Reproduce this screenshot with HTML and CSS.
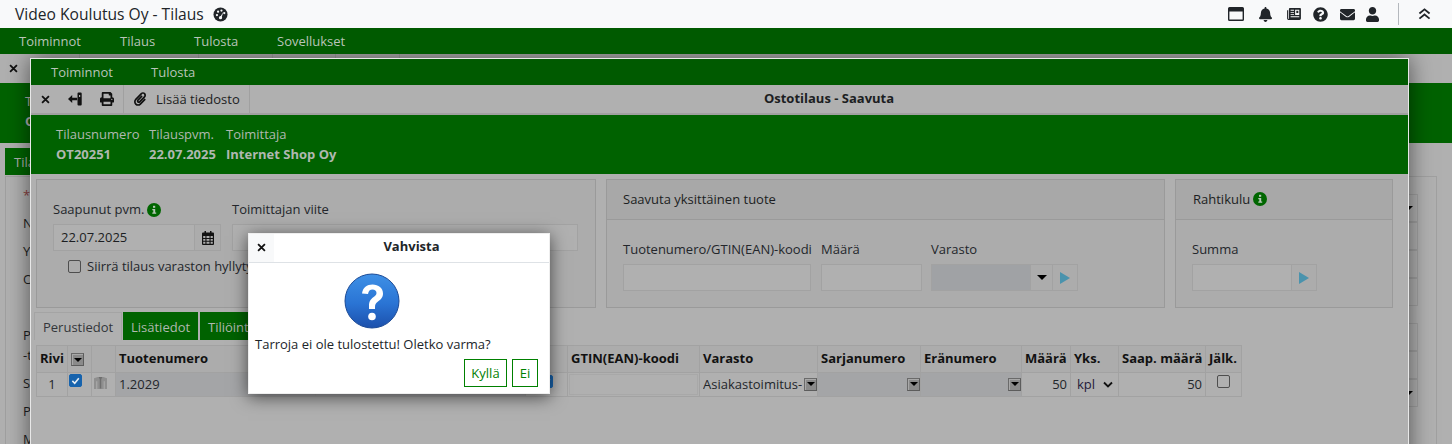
FILE: index.html
```html
<!DOCTYPE html>
<html lang="fi">
<head>
<meta charset="utf-8">
<title>Video Koulutus Oy - Tilaus</title>
<link rel="stylesheet" href="styles.css">
</head>
<body>
<svg class="defs" width="0" height="0">
  <defs>
    <symbol id="i-x" viewBox="0 0 10 10"><path d="M1.200 1.200l7.600 7.600m0-7.600L1.200 8.800" fill="none" stroke="#111" stroke-width="2"/></symbol>
    <symbol id="i-info" viewBox="0 0 14 14"><circle cx="7" cy="7" r="7" fill="#006600"/><rect x="6" y="2.800" width="2.200" height="2" fill="#b8c8b8"/><path d="M5.300 6h2.900v3.600h1v1.200H5.300V9.600h1V7.200h-1z" fill="#b8c8b8"/></symbol>
    <symbol id="i-play" viewBox="0 0 12 14"><path d="M1 1l10 6-10 6z" fill="#4a93ad"/></symbol>
    <symbol id="i-check" viewBox="0 0 14 14"><path d="M3 7.500l3 3 5.200-6.500" fill="none" stroke="#e8eef4" stroke-width="2"/></symbol>
  </defs>
</svg>

<header class="topbar">
  <h1 class="app-title">Video Koulutus Oy - Tilaus</h1>
  <svg class="dash-icon" viewBox="0 0 16 16"><circle cx="8" cy="8" r="7.500" fill="#212529"/><circle cx="4.200" cy="8.600" r="1.200" fill="#f8f9fa"/><circle cx="5.400" cy="5" r="1.200" fill="#f8f9fa"/><circle cx="9" cy="3.800" r="1.200" fill="#f8f9fa"/><circle cx="12" cy="6.400" r="1.200" fill="#f8f9fa"/><path d="M11 5.200L7.600 10.600l1.500.9z" fill="#f8f9fa"/><circle cx="8" cy="11.400" r="1.700" fill="#f8f9fa"/></svg>
  <div class="top-icons">
    <svg class="ti ti-win" viewBox="0 0 16 14"><path d="M1.500 0h13A1.500 1.500 0 0 1 16 1.500v11a1.500 1.500 0 0 1-1.500 1.500h-13A1.500 1.500 0 0 1 0 12.500v-11A1.500 1.500 0 0 1 1.500 0zM1.400 4.400v8.200h13.200V4.400z" fill-rule="evenodd"/></svg>
    <svg class="ti ti-bell" viewBox="0 0 448 512"><path d="M224 512c35.32 0 63.97-28.65 63.97-64H160.03c0 35.35 28.65 64 63.97 64zm215.39-149.71c-19.32-20.76-55.47-51.99-55.47-154.29 0-77.7-54.48-139.9-127.94-155.16V32c0-17.67-14.32-32-31.98-32s-31.98 14.33-31.98 32v20.84C118.56 68.1 64.08 130.3 64.08 208c0 102.3-36.15 133.53-55.47 154.29-6 6.45-8.66 14.16-8.61 21.71.11 16.4 12.98 32 32.1 32h383.8c19.12 0 32-15.6 32.1-32 .05-7.55-2.61-15.27-8.61-21.71z"/></svg>
    <svg class="ti ti-news" viewBox="0 0 15 13"><path d="M3 0h11a1 1 0 0 1 1 1v10.500a1.500 1.500 0 0 1-1.500 1.500H1.500A1.500 1.500 0 0 1 0 11.500V2.500h1.200v9a.4.4 0 0 0 .8 0V1a1 1 0 0 1 1-1z"/><path d="M3.800 2h3.700v1H3.800zm0 2.200h3.700v1H3.800zm0 2.200h3.700v1H3.800zM3.800 9h9.400v1.100H3.800zM8.700 2h4.500v5.500H8.700z" fill="#f8f9fa"/><path d="M10 3h2.200v2.500H10z"/></svg>
    <svg class="ti ti-q" viewBox="0 0 512 512"><path d="M504 256c0 136.997-111.043 248-248 248S8 392.997 8 256C8 119.083 119.043 8 256 8s248 111.083 248 248zM262.655 90c-54.497 0-89.255 22.957-116.549 63.758-3.536 5.286-2.353 12.415 2.715 16.258l34.699 26.31c5.205 3.947 12.621 3.008 16.665-2.122 17.864-22.658 30.113-35.797 57.303-35.797 20.429 0 45.698 13.148 45.698 32.958 0 14.976-12.363 22.667-32.534 33.976C247.128 238.528 216 254.941 216 296v4c0 6.627 5.373 12 12 12h56c6.627 0 12-5.373 12-12v-1.333c0-28.462 83.186-29.647 83.186-106.667 0-58.002-60.165-102-116.531-102zM256 338c-25.365 0-46 20.635-46 46 0 25.364 20.635 46 46 46s46-20.636 46-46c0-25.365-20.635-46-46-46z"/></svg>
    <svg class="ti ti-mail" viewBox="0 0 512 512"><path d="M502.3 190.8c3.9-3.1 9.7-.2 9.7 4.7V400c0 26.5-21.5 48-48 48H48c-26.5 0-48-21.5-48-48V195.6c0-5 5.7-7.8 9.7-4.7 22.4 17.4 52.1 39.5 154.1 113.6 21.1 15.4 56.7 47.8 92.2 47.6 35.7.3 72-32.8 92.3-47.6 102-74.1 131.6-96.3 154-113.7zM256 320c23.2.4 56.6-29.2 73.4-41.4 132.7-96.3 142.8-104.7 173.4-128.7 5.8-4.5 9.2-11.5 9.2-18.9v-19c0-26.5-21.5-48-48-48H48C21.5 64 0 85.5 0 112v19c0 7.4 3.4 14.3 9.2 18.9 30.6 23.9 40.7 32.4 173.4 128.7 16.8 12.2 50.2 41.8 73.4 41.4z"/></svg>
    <svg class="ti ti-user" viewBox="0 0 448 512"><path d="M224 256c70.7 0 128-57.3 128-128S294.7 0 224 0 96 57.3 96 128s57.3 128 128 128zm89.6 32h-16.7c-22.2 10.2-46.9 16-72.9 16s-50.6-5.8-72.9-16h-16.7C60.2 288 0 348.2 0 422.4V464c0 26.5 21.5 48 48 48h352c26.5 0 48-21.5 48-48v-41.6c0-74.2-60.2-134.4-134.4-134.4z"/></svg>
    <span class="top-sep"></span>
    <svg class="ti-up" viewBox="0 0 14 13"><path d="M1.500 6L7 1.500 12.500 6M1.500 11.500L7 7l5.500 4.500" fill="none" stroke="#212529" stroke-width="2"/></svg>
  </div>
</header>

<nav class="mainnav">
  <a class="nav-a nav-1">Toiminnot</a><a class="nav-a nav-2">Tilaus</a><a class="nav-a nav-3">Tulosta</a><a class="nav-a nav-4">Sovellukset</a>
</nav>

<main class="stage">
  <div class="bg-toolbar">
    <span class="bg-cell bg-c1"><svg class="x-icon"><use href="#i-x"/></svg></span>
    <span class="bg-cell bg-c2"></span><span class="bg-cell bg-c3"></span><span class="bg-cell bg-c4"></span><span class="bg-cell bg-c5"></span>
  </div>
  <div class="bg-green"><span>T</span><b>O</b></div>
  <div class="bg-tab">Tila</div>
  <div class="bg-panel">
    <div class="bg-labels">
      <span class="bg-star">*</span><span>N</span><span>Y</span><span>O</span><span class="bg-spacer"></span><span class="bg-short">P</span><span>-t</span><span>S</span><span>P</span><span>M</span>
    </div>
    <div class="bg-inputs">
      <span class="bg-input"><i class="caret"></i></span><span class="bg-input"></span><span class="bg-input"></span><span class="bg-input"></span>
      <span class="bg-gap"></span>
      <span class="bg-input"></span><span class="bg-input"></span><span class="bg-input"><i class="caret"></i></span>
    </div>
  </div>

  <section class="window">
    <div class="win-menu"><a class="wm-1">Toiminnot</a><a class="wm-2">Tulosta</a></div>
    <div class="win-tools">
      <div class="tool-group">
        <svg class="x-icon"><use href="#i-x"/></svg>
        <svg class="exit-icon" viewBox="0 0 14 14"><path d="M0 7l4.200-4v2.700h5v2.600h-5V11z"/><path fill-rule="evenodd" d="M10.500.5h2.200a1 1 0 0 1 1 1v11a1 1 0 0 1-1 1h-2.200a1 1 0 0 1-1-1v-11a1 1 0 0 1 1-1zm.5 2.500v2h1.200V3z"/></svg>
        <svg class="print-icon" viewBox="0 0 512 512"><path d="M448 192V77.25c0-8.49-3.37-16.62-9.37-22.63L393.37 9.37c-6-6-14.14-9.37-22.63-9.37H96C78.33 0 64 14.33 64 32v160c-35.35 0-64 28.65-64 64v112c0 8.84 7.16 16 16 16h48v96c0 17.67 14.33 32 32 32h320c17.67 0 32-14.33 32-32v-96h48c8.84 0 16-7.16 16-16V256c0-35.35-28.65-64-64-64zm-64 256H128v-96h256v96zm0-224H128V64h192v48c0 8.84 7.16 16 16 16h48v96zm48 72c-13.25 0-24-10.75-24-24 0-13.26 10.75-24 24-24s24 10.74 24 24c0 13.25-10.75 24-24 24z"/></svg>
      </div>
      <div class="tool-attach">
        <svg class="clip-icon" viewBox="0 0 448 512"><path d="M43.246 466.142c-58.43-60.289-57.341-157.511 1.386-217.581L254.392 34c44.316-45.332 116.351-45.336 160.671 0 43.89 44.894 43.943 117.329 0 162.276L232.214 383.128c-29.855 30.537-78.633 30.111-107.982-.998-28.275-29.97-27.368-77.473 1.452-106.953l143.743-146.835c6.182-6.314 16.312-6.422 22.626-.241l22.861 22.379c6.315 6.182 6.422 16.312.241 22.626L171.427 319.927c-4.932 5.045-5.236 13.428-.648 18.292 4.372 4.634 11.245 4.711 15.688.165l182.849-186.851c19.613-20.062 19.613-52.725-.011-72.798-19.189-19.627-49.957-19.637-69.154 0L90.39 293.295c-34.763 35.56-35.299 93.12-1.191 128.313 34.01 35.093 88.985 35.137 123.058.286l172.06-175.999c6.177-6.319 16.307-6.433 22.626-.256l22.877 22.364c6.319 6.177 6.434 16.307.256 22.626l-172.06 175.998c-59.576 60.938-155.943 60.216-214.77-.485z"/></svg>
        <span>Lisää tiedosto</span>
      </div>
      <div class="win-title">Ostotilaus - Saavuta</div>
    </div>
    <div class="win-info">
      <div class="info-col ic-1"><span>Tilausnumero</span><b>OT20251</b></div>
      <div class="info-col ic-2"><span>Tilauspvm.</span><b>22.07.2025</b></div>
      <div class="info-col"><span>Toimittaja</span><b>Internet Shop Oy</b></div>
    </div>

    <div class="win-panels">
      <div class="panel p-main">
        <div class="field-row">
          <div class="field f-date">
            <label class="lbl">Saapunut pvm.<svg class="info-icon"><use href="#i-info"/></svg></label>
            <div class="input-group">
              <span class="input date-input">22.07.2025</span>
              <span class="addon addon-cal"><svg class="cal-icon" viewBox="0 0 12 14"><path fill-rule="evenodd" d="M2.500 0h1.500v1.500h4V0h1.500v1.500H11a1 1 0 0 1 1 1V13a1 1 0 0 1-1 1H1a1 1 0 0 1-1-1V2.500a1 1 0 0 1 1-1h1.500zM1.200 5v1.900h2.200V5zm3.300 0v1.900h3V5zm4.100 0v1.900h2.200V5zM1.200 7.900v1.900h2.200V7.900zm3.300 0v1.900h3V7.900zm4.100 0v1.900h2.200V7.900zM1.200 10.800v2h2.200v-2zm3.300 0v2h3v-2zm4.100 0v2h2.200v-2z"/></svg></span>
            </div>
          </div>
          <div class="field f-ref">
            <label class="lbl">Toimittajan viite</label>
            <span class="input ref-input"></span>
          </div>
        </div>
        <div class="check-row"><span class="checkbox"></span><span>Siirrä tilaus varaston hyllyty</span></div>
      </div>

      <div class="panel p-single">
        <div class="panel-head">Saavuta yksittäinen tuote</div>
        <div class="panel-body">
          <div class="field f-code"><label class="lbl">Tuotenumero/GTIN(EAN)-koodi</label><span class="input"></span></div>
          <div class="field f-qty"><label class="lbl">Määrä</label><span class="input"></span></div>
          <div class="field f-store">
            <label class="lbl">Varasto</label>
            <div class="input-group">
              <span class="input store-input"></span>
              <span class="addon addon-caret"><i class="caret"></i></span>
              <span class="addon addon-play"><svg class="play-icon"><use href="#i-play"/></svg></span>
            </div>
          </div>
        </div>
      </div>

      <div class="panel p-freight">
        <div class="panel-head">Rahtikulu<svg class="info-icon"><use href="#i-info"/></svg></div>
        <div class="panel-body">
          <div class="field f-sum">
            <label class="lbl">Summa</label>
            <div class="input-group">
              <span class="input sum-input"></span>
              <span class="addon addon-play"><svg class="play-icon"><use href="#i-play"/></svg></span>
            </div>
          </div>
        </div>
      </div>
    </div>

    <div class="tabs">
      <span class="tab tab-active">Perustiedot</span>
      <span class="tab tab-2">Lisätiedot</span>
      <span class="tab tab-3">Tiliöint</span>
    </div>

    <table class="grid">
      <thead>
        <tr>
          <th class="c-rivi">Rivi</th>
          <th class="c-chk"><i class="ddbtn"></i></th>
          <th class="c-ico"></th>
          <th class="c-no">Tuotenumero</th>
          <th class="c-name"></th>
          <th class="c-flag"></th>
          <th class="c-gtin">GTIN(EAN)-koodi</th>
          <th class="c-store">Varasto</th>
          <th class="c-serial">Sarjanumero</th>
          <th class="c-batch">Eränumero</th>
          <th class="c-qty">Määrä</th>
          <th class="c-unit">Yks.</th>
          <th class="c-recv">Saap. määrä</th>
          <th class="c-late">Jälk.</th>
        </tr>
      </thead>
      <tbody>
        <tr>
          <td class="t-center">1</td>
          <td class="t-tight"><span class="checkbox checked"><svg class="check-icon"><use href="#i-check"/></svg></span></td>
          <td class="t-tight"><svg class="shirt-icon" viewBox="0 0 14 14"><path d="M0 2l4-1.500h6L14 2v11.500h-2.500V5h-1v8.500h-7V5h-1v8.500H0z" fill="#8f8f8f"/><path d="M5 .5h4L7.800 3v10H6.200V3z" fill="#6e6e6e"/></svg></td>
          <td class="t-dark">1.2029</td>
          <td class="t-dark"></td>
          <td class="t-center t-top"><span class="checkbox checked"><svg class="check-icon"><use href="#i-check"/></svg></span></td>
          <td class="t-gtin"><span class="cell-input"></span></td>
          <td class="t-dd"><div class="cell-flex"><span class="cell-text">Asiakastoimitus-</span><i class="ddbtn"></i></div></td>
          <td class="t-dark t-dd"><div class="cell-flex cell-end"><i class="ddbtn"></i></div></td>
          <td class="t-dark t-dd"><div class="cell-flex cell-end"><i class="ddbtn"></i></div></td>
          <td class="t-right">50</td>
          <td><div class="cell-flex unit-flex"><span class="unit-text">kpl</span><svg class="chev" viewBox="0 0 10 7"><path d="M1 1.500l4 4 4-4" fill="none" stroke="#111" stroke-width="1.800"/></svg></div></td>
          <td class="t-right">50</td>
          <td class="t-center t-top"><span class="checkbox"></span></td>
        </tr>
      </tbody>
    </table>
  </section>

  <section class="dialog">
    <div class="dlg-head">
      <span class="dlg-close"><svg class="x-icon"><use href="#i-x"/></svg></span>
      <span class="dlg-title">Vahvista</span>
    </div>
    <div class="dlg-body">
      <svg class="q-icon" viewBox="0 0 56 56">
        <defs>
          <linearGradient id="qg" x1="0" y1="0" x2="0" y2="1"><stop offset="0" stop-color="#3e90e6"/><stop offset=".55" stop-color="#2a74d4"/><stop offset="1" stop-color="#1c50ac"/></linearGradient>
        </defs>
        <circle cx="28" cy="28" r="27" fill="url(#qg)" stroke="#1b4a96" stroke-width="1"/>
        <path d="M18 20.500c.8-6 5-9 10.500-9 6 0 10.500 3.500 10.500 9 0 4-2.300 6-5 8-2.300 1.700-3 3-3 6v1.500h-6V33c0-4.500 1.500-6.500 4.300-8.700 2-1.600 3.200-2.600 3.200-4.300 0-2-1.700-3.400-4-3.400-2.500 0-4 1.500-4.500 4.400z" fill="#fff"/>
        <circle cx="28" cy="43.500" r="3.800" fill="#fff"/>
      </svg>
      <p class="dlg-msg">Tarroja ei ole tulostettu! Oletko varma?</p>
      <div class="dlg-actions">
        <button class="dlg-btn btn-yes">Kyllä</button>
        <button class="dlg-btn btn-no">Ei</button>
      </div>
    </div>
  </section>
</main>
</body>
</html>
```
FILE: styles.css
```css
* { box-sizing: border-box; }
html, body { margin: 0; height: 444px; overflow: hidden; }
body { font-family: "Open Sans", sans-serif; font-size: 13px; color: #1c1e22; background: #b0b0b0; display: flex; flex-direction: column; }
.defs { display: block; height: 0; }
a { display: inline-block; }

/* top bar */
.topbar { height: 28px; flex: none; background: #f8f9fa; display: flex; align-items: center; padding-left: 15px; color: #212529; }
.app-title { margin: 0; font-size: 15.6px; font-weight: 400; line-height: 28px; }
.dash-icon { width: 15px; height: 15px; margin-left: 9px; }
.top-icons { margin-left: auto; display: flex; align-items: center; height: 28px; fill: #212529; }
.ti { display: block; }
.ti-win { width: 16px; height: 14px; margin-right: 15px; }
.ti-bell { width: 13px; height: 15px; margin-right: 15px; }
.ti-news { width: 14px; height: 12px; margin-right: 12px; }
.ti-q { width: 15px; height: 15px; margin-right: 12px; }
.ti-mail { width: 15px; height: 15px; margin-right: 11px; }
.ti-user { width: 13px; height: 15px; }
.top-sep { width: 1px; height: 22px; background: #b4b8bd; margin: 0 19px 0 19px; }
.ti-up { width: 13px; height: 12px; margin-right: 21px; }

/* nav */
.mainnav { height: 26px; flex: none; background: #005a00; color: #b8c4b8; display: flex; align-items: center; padding-left: 19px; }
.nav-1 { width: 101px; } .nav-2 { width: 74px; } .nav-3 { width: 83px; }

/* stage */
.stage { position: relative; flex: 1; overflow: hidden; background: #b0b0b0; }
.bg-toolbar { height: 29px; display: flex; }
.bg-cell { display: flex; align-items: center; height: 29px; border-right: 1px solid #a2a2a2; }
.bg-c1 { width: 80px; padding-left: 9px; } .bg-c2 { width: 119px; } .bg-c3 { width: 74px; } .bg-c4 { width: 63px; } .bg-c5 { width: 64px; }
.bg-green { height: 60px; background: #006200; color: #b0b0b0; padding: 10px 0 0 25px; display: flex; flex-direction: column; gap: 3px; line-height: 17px; }
.bg-tab { height: 27px; width: 25px; margin: 5px 0 0 5px; background: #006200; color: #b0b0b0; padding: 5px 0 0 9px; white-space: nowrap; }
.bg-panel { margin: 1px 15px 0 5px; border: 1px solid #a0a0a0; border-bottom: 0; height: 280px; display: flex; justify-content: space-between; }
.bg-labels { display: flex; flex-direction: column; padding: 6px 0 0 17px; line-height: 18px; }
.bg-labels span { height: 28px; padding-top: 9px; display: block; }
.bg-labels .bg-star { color: #8b4040; height: 22px; padding-top: 3px; }
.bg-labels .bg-spacer { height: 28px; }
.bg-labels .bg-short { height: 20px; }
.bg-inputs { display: flex; flex-direction: column; width: 28px; margin-top: 17px; }
.bg-input { display: flex; align-items: center; justify-content: flex-end; padding-right: 4px; height: 28px; border: 1px solid #a0a0a0; width: 11px; margin-left: -1px; }
.bg-gap { height: 17px; }

/* window */
.window { position: absolute; left: 30px; top: 4px; width: 1379px; height: 420px; background: #b0b0b0; border: 1px solid #e8e8e8; border-bottom: 0; box-shadow: 0 0 22px rgba(0,0,0,.55); }
.win-menu { height: 26px; background: #005a00; color: #b8c4b8; display: flex; align-items: center; padding-left: 20px; }
.wm-1 { width: 100px; }
.win-tools { height: 30px; display: flex; align-items: center; border-bottom: 2px solid #a0a0a0; }
.tool-group { display: flex; align-items: center; width: 93px; height: 28px; padding-left: 10px; border-right: 1px solid #a0a0a0; fill: #111; }
.exit-icon { width: 14px; height: 14px; margin-left: 18px; }
.print-icon { width: 14px; height: 14px; margin-left: 18px; }
.tool-attach { display: flex; align-items: center; width: 126px; height: 28px; padding-left: 10px; border-right: 1px solid #a0a0a0; }
.clip-icon { width: 12px; height: 14px; fill: #111; margin-right: 10px; flex: none; }
.win-title { flex: 1; text-align: center; font-weight: 700; padding-bottom: 3px; }
.win-info { height: 59px; background: #006200; color: #b0b8b0; display: flex; padding: 11px 0 0 25px; }
.info-col { display: flex; flex-direction: column; gap: 3px; line-height: 17px; }
.info-col b { font-weight: 700; }
.ic-1 { width: 93px; } .ic-2 { width: 77px; }

.win-panels { display: flex; gap: 10px; padding: 5px 0 0 5px; }
.panel { height: 129px; border: 1px solid #9a9a9a; background: #acacac; }
.p-main { width: 560px; padding: 21px 0 0 16px; }
.p-single { width: 559px; }
.p-freight { width: 218px; }
.panel-head { height: 40px; border-bottom: 1px solid #9a9a9a; background: #a8a8a8; display: flex; align-items: center; padding: 0 0 2px 16px; gap: 3px; }
.p-freight .panel-head { padding-left: 17px; }
.panel-body { display: flex; padding: 21px 0 0 16px; }
.field-row { display: flex; }
.field { display: flex; flex-direction: column; }
.lbl { height: 23px; line-height: 17px; display: flex; align-items: flex-start; gap: 3px; white-space: pre; color: #23262b; }
.info-icon { width: 14px; height: 14px; margin-top: 2px; flex: none; }
.panel-head .info-icon { margin-top: 0; }
.input { display: block; height: 27px; background: #b0b0b0; border: 1px solid #a2a2a2; line-height: 25px; }
.input-group { display: flex; }
.addon { display: flex; align-items: center; justify-content: center; height: 27px; border: 1px solid #a2a2a2; border-left: 0; }
.f-date { width: 179px; }
.f-ref { width: 346px; }
.date-input { width: 142px; padding-left: 7px; }
.addon-cal { width: 26px; }
.cal-icon { width: 12px; height: 14px; fill: #111; }
.ref-input { width: 346px; }
.f-code { width: 198px; } .f-code .input { width: 188px; }
.f-qty { width: 110px; } .f-qty .input { width: 101px; }
.store-input { width: 100px; background: #a0a2a5; }
.addon-caret { width: 22px; }
.caret { width: 0; height: 0; border: 5px solid transparent; border-top: 5px solid #000; border-bottom: 0; flex: none; }
.addon-play { width: 25px; }
.play-icon { width: 12px; height: 14px; }
.sum-input { width: 100px; }
.check-row { display: flex; align-items: center; gap: 6px; margin: 6px 0 0 15px; color: #23262b; white-space: nowrap; }
.checkbox { display: inline-block; width: 13px; height: 13px; border: 1px solid #4e4e4e; border-radius: 2px; flex: none; vertical-align: top; }
.checkbox.checked { background: #1763ad; border-color: #1763ad; }
.check-icon { display: block; width: 11px; height: 11px; }

.tabs { display: flex; gap: 1px; padding: 4px 0 0 3px; height: 32px; }
.tab { height: 28px; display: flex; align-items: center; padding: 1px 8px 0; background: #006200; color: #b0b8b0; }
.tab-active { width: 88px; background: #b0b0b0; color: #33363a; border: 1px solid #a4a4a4; border-bottom: 0; }
.tab-2 { width: 75px; } .tab-3 { width: 80px; margin-left: 1px; }

.grid { border-collapse: collapse; table-layout: fixed; width: 1205px; margin: 5px 0 0 5px; }
.grid th, .grid td { border: 1px solid #a2a2a2; padding: 0 3px; overflow: hidden; white-space: nowrap; }
.grid th { height: 27px; background: #acacac; text-align: left; font-weight: 700; color: #111; padding-bottom: 2px; }
.grid td { height: 24px; color: #23262b; padding-bottom: 1px; }
.c-rivi { width: 31px; } .c-chk { width: 24px; } .c-ico { width: 24px; }
.c-no { width: 200px; } .c-name { width: 210px; } .c-flag { width: 42px; }
.c-gtin { width: 132px; } .c-store { width: 118px; } .c-serial { width: 103px; } .c-batch { width: 101px; }
.c-qty { width: 49px; } .c-unit { width: 48px; } .c-recv { width: 87px; } .c-late { width: 36px; }
.grid .t-dark { background: #a4a5a7; }
.t-center { text-align: center; }
.t-right { text-align: right; }
.grid .t-tight { padding: 1px 0 0 1px; vertical-align: top; }
.grid .t-top { vertical-align: top; padding-top: 2px; }
.grid .t-dd { padding-right: 0; }
.grid .t-gtin { padding: 1px; }
.cell-input { display: block; height: 21px; background: #b0b0b0; border: 1px solid #a8a8a8; }
.cell-flex { display: flex; align-items: center; justify-content: space-between; }
.cell-end { justify-content: flex-end; }
.cell-text { overflow: hidden; }
.ddbtn { display: inline-flex; align-items: center; justify-content: center; width: 13px; height: 13px; background: #8a8a8a; border: 1px solid; border-color: #6a6a6a #5c5c5c #5c5c5c #6a6a6a; box-shadow: inset 1px 1px 0 #a8a8a8; flex: none; vertical-align: middle; }
.ddbtn::before { content: ""; width: 0; height: 0; border: 4px solid transparent; border-top: 4px solid #000; border-bottom: 0; }
.shirt-icon { width: 13px; height: 14px; display: block; margin: 2px 0 0 1px; }
.unit-flex { padding: 0 2px 0 3px; }
.unit-text { color: #241b3a; }
.chev { width: 10px; height: 7px; }

.x-icon { width: 9px; height: 9px; display: block; flex: none; }

/* dialog */
.dialog { position: absolute; left: 248px; top: 179px; width: 302px; height: 161px; background: #fff; box-shadow: 0 3px 16px rgba(0,0,0,.6); border: 1px solid #eee; }
.dlg-head { height: 29px; border-bottom: 1px solid #dee2e6; display: flex; align-items: center; }
.dlg-close { width: 25px; height: 28px; background: #f8f9fa; display: flex; align-items: center; justify-content: center; padding-bottom: 2px; }
.dlg-title { flex: 1; text-align: center; font-weight: 700; color: #212529; padding-bottom: 5px; }
.dlg-body { display: flex; flex-direction: column; padding: 10px 11px 0 6px; }
.q-icon { width: 56px; height: 56px; margin-left: 89px; }
.dlg-msg { margin: 7px 0 0; line-height: 17px; color: #212529; }
.dlg-actions { display: flex; justify-content: flex-end; gap: 5px; margin-top: 6px; }
.dlg-btn { height: 28px; padding: 0; background: #fff; border: 1px solid #008000; color: #008000; font: inherit; }
.btn-yes { width: 43px; }
.btn-no { width: 26px; }
```
